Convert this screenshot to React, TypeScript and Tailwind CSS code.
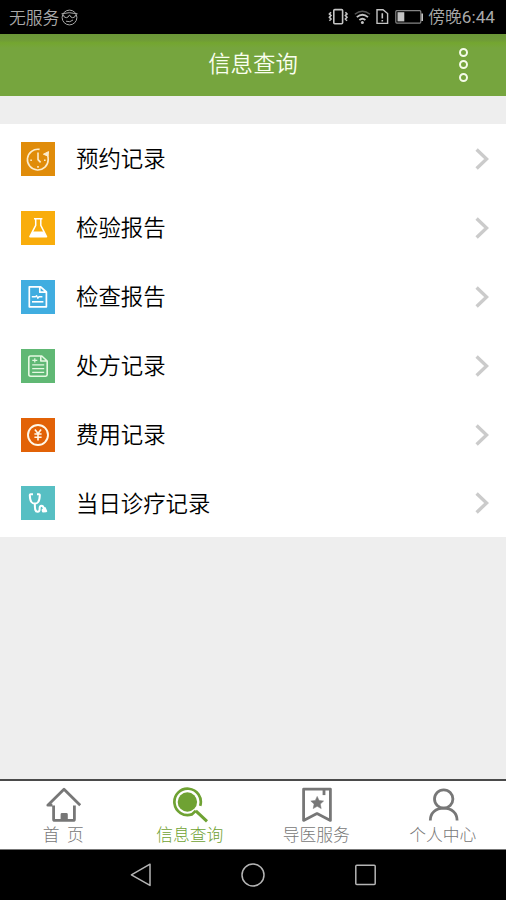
import type { ReactNode } from 'react';

interface RecordItem {
  label: string;
  color: string;
  icon: ReactNode;
}

interface TabItem {
  label: string;
  active?: boolean;
  icon: ReactNode;
}

// Row icons share a 34x34 box, the tile colour comes from the row
const RECORDS: RecordItem[] = [
  {
    label: '预约记录',
    color: 'bg-[#e08c0a]',
    icon: (
      <g stroke="#fdeccb" strokeWidth="1.6">
        <path d="M18.6 7.4A10.4 10.4 0 1 0 27.2 17.6q0-3-1-5.6" />
        <path d="M17 10.4v7.2l2.6 2.8" />
        <path d="M9.3 18.2h1.6M23 18.2h1.6M17 24v1.8" />
        <path d="M22.4 12.2l5.2-2.6-.6 4.6z" fill="#fdeccb" strokeWidth="1" />
      </g>
    ),
  },
  {
    label: '检验报告',
    color: 'bg-[#f9ad0c]',
    icon: (
      <>
        <path d="M13 7.8h8.4M14.7 8v6.4L8.9 25.7h16.6L19.8 14.4V8" stroke="#fff" strokeWidth="1.5" />
        <path d="M11.8 20.6h10.6l3.2 5.4H8.7z" fill="#fff" />
      </>
    ),
  },
  {
    label: '检查报告',
    color: 'bg-[#40ade0]',
    icon: (
      <g stroke="#fff" strokeWidth="1.7">
        <path d="M8.3 6.8h11.4l5.7 5.2v14.8H8.3zM18.8 7v5.2h6.4" />
        <path d="M10.8 16.8h3.6l1.2-1 1.2 2.4 1.2-1.4h3.4" strokeWidth="1.4" />
        <path d="M11 21.8h11.4" strokeWidth="1.6" />
      </g>
    ),
  },
  {
    label: '处方记录',
    color: 'bg-[#60b874]',
    icon: (
      <g stroke="#e5f8e1" strokeWidth="1.6">
        <path d="M9.6 7h11.2l5.4 5v13.6q0 1.6-1.6 1.6H9.6q-1.8 0-1.8-1.6V8.8q0-1.8 1.8-1.8zM19.8 7.2V12h6" />
        <path d="M11.3 11.4h5M13.8 9.2v4.4M11.2 15.8h12M11.2 19.6h12M11.2 23.3h12" strokeWidth="1.2" />
      </g>
    ),
  },
  {
    label: '费用记录',
    color: 'bg-[#e26207]',
    icon: (
      <g stroke="#fff8e9">
        <circle cx="17" cy="17" r="10" strokeWidth="1.9" />
        <path d="M13.9 11.6l3.1 4 3.1-4M13.4 16h7.2M13.4 19.2h7.2M17 15.6v6.9" strokeWidth="1.6" />
      </g>
    ),
  },
  {
    label: '当日诊疗记录',
    color: 'bg-[#57bfc3]',
    icon: (
      <g stroke="#fff" strokeWidth="2">
        <path d="M12 8.2H9.6q-.9 0-.8 1.2.2 4.8 1.6 6.6 1.2 1.6 3.4 1.6t3.4-1.6q1.4-1.8 1.6-6.6.1-1.2-.8-1.2h-2" />
        <path d="M13.8 17.6c0 6 .4 8.2 2.6 8.2 2.4 0 2.2-2 2.2-3.2 0-1.8.4-2.8 1.9-2.8s1.9 1 2.1 2.4" />
        <path d="M23.8 22l1.4 3.2-3.2.4-.4-1.6z" fill="#fff" />
      </g>
    ),
  },
];

const TABS: TabItem[] = [
  {
    label: '首\u00a0\u00a0页',
    icon: (
      <>
        <path d="M6.4 18.2H1.8L18 2.2l16.2 16M7.6 18.4v13.8q0 1.2 1.2 1.2h18.4q1.2 0 1.2-1.2V18.6" />
        <path d="M16 33.4v-6h4.4v6" fill="currentColor" />
      </>
    ),
  },
  {
    label: '信息查询',
    active: true,
    icon: (
      <>
        <circle cx="14.4" cy="15" r="9.7" fill="currentColor" stroke="none" />
        <path d="M27.2 18.8A13.2 13.2 0 1 0 18.8 27.4L22.8 23.8" strokeWidth="2.7" />
        <path d="M22.8 23.8L34 34.4" strokeWidth="3" />
      </>
    ),
  },
  {
    label: '导医服务',
    icon: (
      <>
        <path d="M4.6 2.2h26.8v31.2L18 26.6 4.6 33.4z" />
        <path d="M25 2.5v5.6" />
        <path
          d="M18.2 9.4l1.9 4.1 4.5.5-3.3 3.1.9 4.5-4-2.3-4 2.3.9-4.5-3.3-3.1 4.5-.5z"
          fill="currentColor"
          strokeWidth=".5"
        />
      </>
    ),
  },
  {
    label: '个人中心',
    icon: (
      <>
        <circle cx="17.7" cy="12" r="9.2" />
        <path d="M4.3 33.4C4.3 26 9.7 21.2 17.7 21.2S31.1 26 31.1 33.4" />
      </>
    ),
  },
];

function StatusBar() {
  return (
    <div className="flex h-[34px] items-center justify-between bg-black pl-[9px] pr-[11px] text-[#a9a9a9]">
      <div className="flex items-center gap-[2px]">
        <span className="text-[16.8px] font-[350] leading-none">无服务</span>
        <svg width="17" height="17" viewBox="0 0 17 17" fill="none" stroke="currentColor" strokeWidth="1">
          <circle cx="8.5" cy="8.5" r="7.4" />
          <path d="M.5 4.8q7.5-2.2 16 0M2.3 5.5q.4 3.4 3 3.2 2.2-.2 2.8-2.4h.8q.6 2.2 2.8 2.4 2.6.2 3-3.2M5 12.2q4 1.6 7-1.2" />
        </svg>
      </div>
      <div className="flex items-center">
        <svg width="96" height="18" viewBox="0 0 96 18" fill="none" stroke="#c4c4c4">
          {/* vibrate */}
          <rect x="6.8" y="1.6" width="8.8" height="14.2" rx="1" strokeWidth="1.6" />
          <path d="M4 4.2l-1.6 1.7 1.6 1.7-1.6 1.7 1.6 1.7-1.6 1.7M18.4 4.2l1.6 1.7-1.6 1.7 1.6 1.7-1.6 1.7 1.6 1.7" strokeWidth="1.6" />
          {/* wifi */}
          <path d="M27.8 6.2q7.6-6 15.2 0" stroke="#555" strokeWidth="1.4" />
          <path d="M29.8 9.1q5.6-4.8 11.2 0M32.4 12q3-2.6 6 0" strokeWidth="1.8" />
          <circle cx="35.4" cy="14.5" r="1.5" fill="#c4c4c4" stroke="none" />
          {/* sim alert */}
          <path d="M50 1.7h6l4.6 3.8v9.9H50z" strokeWidth="1.4" />
          <path d="M55.3 5.2v5.4M55.3 12v1.6" strokeWidth="1.6" />
          {/* battery */}
          <rect x="68.8" y="2.7" width="25" height="12.4" rx="1" stroke="#858585" strokeWidth="1.2" />
          <path d="M70.5 4.2h6.8v9.2h-6.8z" fill="#c4c4c4" stroke="none" />
          <path d="M95.2 5.5v7.4" strokeWidth="1.7" />
        </svg>
        <span className="ml-[5px] text-[16.8px] font-[350] leading-none">
          傍晚<span className="font-[Roboto] text-[17.2px] font-normal">6:44</span>
        </span>
      </div>
    </div>
  );
}

function Header() {
  return (
    <header className="relative flex h-[62px] items-center justify-center bg-[linear-gradient(#6b9638_0,#6f9b38_6px,#74a630_9px,#76a53e_14px)] pb-[5px]">
      <h1 className="text-[22.4px] font-[350] leading-none text-[#fafff0]">信息查询</h1>
      <button className="absolute right-[38px] top-[14px] flex flex-col gap-[3.3px]">
        {[0, 1, 2].map(i => (
          <span key={i} className="size-[9px] rounded-full border-[2.5px] border-[#f4fbe8]" />
        ))}
      </button>
    </header>
  );
}

export default function App() {
  return (
    <div className="flex h-[900px] w-[506px] flex-col overflow-hidden bg-[#eeeeee] font-['Noto_Sans_CJK_SC',sans-serif]">
      <StatusBar />
      <Header />

      {/* Record list */}
      <ul className="mt-7 bg-white">
        {RECORDS.map(record => (
          <li key={record.label} className="flex h-[68.9px] items-center pl-[21px] pr-[17px] pt-px">
            <span className={`size-[34px] shrink-0 ${record.color}`}>
              <svg width="34" height="34" viewBox="0 0 34 34" fill="none" strokeLinejoin="round">
                {record.icon}
              </svg>
            </span>
            <span className="ml-[21px] flex-1 pb-[3px] text-[22.4px] font-[350] leading-none text-black">
              {record.label}
            </span>
            <svg width="14" height="22" viewBox="0 0 14 22" fill="none" stroke="#cbcbcb" strokeWidth="3.4">
              <path d="M1.6 1.6L11.6 11l-10 9.4" />
            </svg>
          </li>
        ))}
      </ul>

      {/* Bottom tabs */}
      <nav className="mt-auto grid h-[71px] shrink-0 grid-cols-4 border-b border-t-2 border-b-[#777] border-t-[#4a4a4a] bg-white">
        {TABS.map(tab => (
          <a
            key={tab.label}
            className={`flex flex-col items-center pt-[6px] ${tab.active ? 'text-[#6fa233]' : 'text-[#777777]'}`}
          >
            <svg
              className="ml-[1.5px]"
              width="36"
              height="36"
              viewBox="0 0 36 36"
              fill="none"
              stroke="currentColor"
              strokeWidth="2.8"
              strokeLinejoin="round"
            >
              {tab.icon}
            </svg>
            <span className="mt-[3px] text-[16.8px] font-light leading-none">{tab.label}</span>
          </a>
        ))}
      </nav>

      {/* System navigation */}
      <div className="flex h-[50px] shrink-0 items-center justify-center bg-black">
        <svg width="250" height="26" viewBox="0 0 250 26" fill="none" stroke="#b5b5b5" strokeWidth="1.5" strokeLinejoin="round">
          <path d="M22 2.2v21.2L3.4 12.8z" />
          <circle cx="125" cy="13" r="11" />
          <rect x="227.8" y="3.2" width="19.4" height="19.4" rx="1" />
        </svg>
      </div>
    </div>
  );
}
